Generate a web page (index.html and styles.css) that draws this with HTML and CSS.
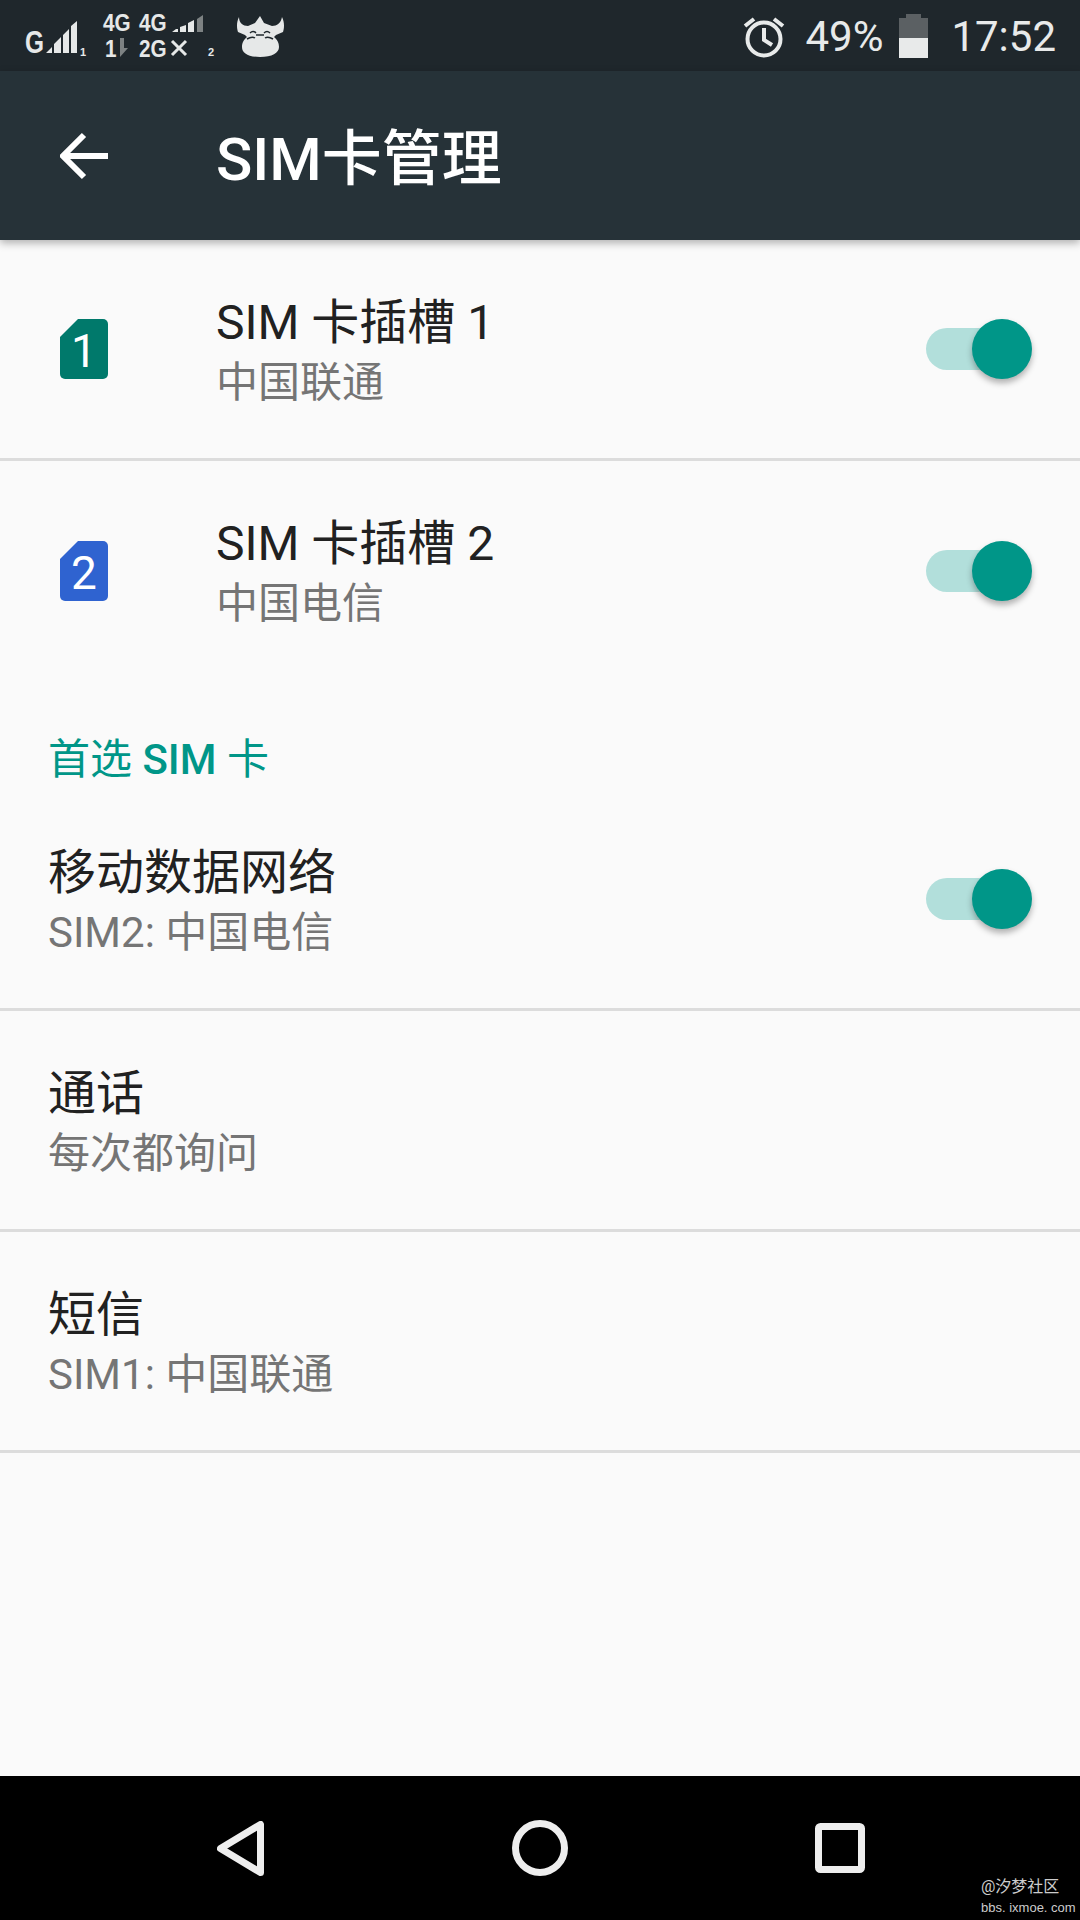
FILE: index.html
```html
<!DOCTYPE html>
<html lang="zh-CN">
<head>
    <meta charset="UTF-8">
    <meta name="viewport" content="width=device-width, initial-scale=1.0">
    <title>SIM卡管理</title>
    <link rel="stylesheet" href="styles.css">
</head>
<body>
<div class="page">

    <div class="statusbar">
        <svg class="net" width="300" height="71" viewBox="0 0 300 71">
            <!-- sim 1 -->
            <text class="net-big" x="25" y="53" textLength="19" lengthAdjust="spacingAndGlyphs">G</text>
            <path class="net-on" d="M46 53l6-6v6zM54 53v-9l7-7v16zM63 53v-18l6-6v24zM71 53v-27l6-5v32z"/>
            <text class="net-tiny" x="80" y="56">1</text>
            <!-- sim 2 -->
            <text class="net-mid" transform="translate(103 31) scale(0.9 1)">4G</text>
            <text class="net-mid" transform="translate(139 31) scale(0.9 1)">4G</text>
            <path class="net-on" d="M172 32l4-3h2v3zM180 32v-5l6-2v7zM188 32v-9l6-3v12z"/>
            <path class="net-off" d="M197 32v-13l6-4v17z"/>
            <text class="net-mid" transform="translate(105 57) scale(0.9 1)">1</text>
            <path class="net-off" d="M120 38h4v10h4l-8 9z"/>
            <text class="net-mid" transform="translate(139 57) scale(0.9 1)">2G</text>
            <path class="net-x" d="M172 41l14 14M186 41l-14 14"/>
            <text class="net-tiny" x="208" y="56">2</text>
            <!-- cow -->
            <path class="net-on" d="M239 17c0 6 4 9 9 9l7-3 5-7 4 7 8 3c5 0 9-3 10-9 3 6 2 12 1 15l-7 3-2 2c4 3 5 7 5 10 0 6-7 10-19 10s-18-4-18-10c0-3 1-7 5-10l-2-2-7-3c-1-3-2-9 1-15z"/>
            <path class="net-cut" d="M250 33q3-3 6 0M264 33q3-3 6 0M247 39q5-3 8-1M273 39q-5-3-8-1M256 35h8"/>
        </svg>

        <div class="status-right">
            <svg class="alarm" width="42" height="44" viewBox="0 0 42 44">
                <circle cx="21" cy="25" r="16.5"/>
                <path d="M21 14v12l8 5M2 12l9-7M40 12l-9-7"/>
            </svg>
            <span class="status-text batt-text">49%</span>
            <div class="battery">
                <div class="battery-cap"></div>
                <div class="battery-used"></div>
                <div class="battery-level"></div>
            </div>
            <span class="status-text">17:52</span>
        </div>
    </div>

    <div class="toolbar">
        <svg class="back" width="48" height="48" viewBox="0 0 48 48">
            <path d="M48 24H4M24 3L3 24l21 21"/>
        </svg>
        <span class="toolbar-title">SIM卡管理</span>
    </div>

    <div class="content">
        <div class="row row-sim divider">
            <svg class="sim-icon" width="48" height="60" viewBox="0 0 48 60">
                <path fill="#00796b" d="M18 0h25a5 5 0 0 1 5 5v50a5 5 0 0 1-5 5H5a5 5 0 0 1-5-5V18z"/>
                <text x="24" y="48" text-anchor="middle">1</text>
            </svg>
            <div class="row-text">
                <div class="row-title">SIM 卡插槽 1</div>
                <div class="row-sub">中国联通</div>
            </div>
            <div class="toggle"><div class="thumb"></div></div>
        </div>

        <div class="row row-sim">
            <svg class="sim-icon" width="48" height="60" viewBox="0 0 48 60">
                <path fill="#2f63d0" d="M18 0h25a5 5 0 0 1 5 5v50a5 5 0 0 1-5 5H5a5 5 0 0 1-5-5V18z"/>
                <text x="24" y="48" text-anchor="middle">2</text>
            </svg>
            <div class="row-text">
                <div class="row-title">SIM 卡插槽 2</div>
                <div class="row-sub">中国电信</div>
            </div>
            <div class="toggle"><div class="thumb"></div></div>
        </div>

        <div class="section-title">首选 <b>SIM</b> 卡</div>

        <div class="row divider">
            <div class="row-text">
                <div class="row-title">移动数据网络</div>
                <div class="row-sub">SIM2: 中国电信</div>
            </div>
            <div class="toggle"><div class="thumb"></div></div>
        </div>

        <div class="row divider">
            <div class="row-text">
                <div class="row-title">通话</div>
                <div class="row-sub">每次都询问</div>
            </div>
        </div>

        <div class="row divider">
            <div class="row-text">
                <div class="row-title">短信</div>
                <div class="row-sub">SIM1: 中国联通</div>
            </div>
        </div>
    </div>

    <div class="navbar">
        <svg class="nav-icon" width="47" height="55" viewBox="0 0 47 55">
            <path d="M43.5 3.5v48L3.5 27.5z"/>
        </svg>
        <svg class="nav-icon" width="56" height="56" viewBox="0 0 56 56">
            <circle cx="28" cy="28" r="24.5"/>
        </svg>
        <svg class="nav-icon" width="50" height="50" viewBox="0 0 50 50">
            <rect x="3.5" y="3.5" width="43" height="43" rx="2"/>
        </svg>
        <div class="watermark">
            <div>@汐梦社区</div>
            <div class="watermark-url">bbs. ixmoe. com</div>
        </div>
    </div>

</div>
</body>
</html>
```

FILE: styles.css
```css
* {
    box-sizing: border-box;
}
body {
    margin: 0;
    font-family: Roboto, "Noto Sans CJK SC", sans-serif;
    background: #000;
}
.page {
    width: 1080px;
    height: 1920px;
    display: flex;
    flex-direction: column;
    overflow: hidden;
}

/* status bar */
.statusbar {
    height: 71px;
    flex: none;
    background: #1f272c;
    display: flex;
    justify-content: space-between;
    align-items: center;
    padding-right: 24px;
    color: #e8eaea;
}
.net {
    display: block;
}
.net text {
    font-family: "Liberation Sans", sans-serif;
    font-weight: bold;
    fill: #e6e8e8;
}
.net-big {
    font-size: 32px;
}
.net-mid {
    font-size: 23px;
}
.net-tiny {
    font-size: 11px;
}
.net-on {
    fill: #e6e8e8;
}
.net-off {
    fill: #7d8283;
}
.net-x {
    fill: none;
    stroke: #e6e8e8;
    stroke-width: 3;
}
.net-cut {
    fill: none;
    stroke: #1f272c;
    stroke-width: 1.5;
}
.status-right {
    display: flex;
    align-items: center;
}
.alarm {
    margin-right: 20px;
    fill: none;
    stroke: #e8eaea;
    stroke-width: 4;
}
.status-text {
    font-size: 42px;
    line-height: 71px;
    padding-top: 2px;
}
.batt-text {
    margin-right: 16px;
}
.battery {
    width: 29px;
    height: 44px;
    margin-right: 23px;
    display: flex;
    flex-direction: column;
    align-items: center;
}
.battery-cap {
    width: 15px;
    height: 4px;
    background: #5b6063;
}
.battery-used {
    width: 100%;
    height: 20px;
    background: #5b6063;
}
.battery-level {
    width: 100%;
    height: 20px;
    background: #e8eaea;
}

/* toolbar */
.toolbar {
    height: 169px;
    flex: none;
    background: #263238;
    display: flex;
    align-items: center;
    padding-left: 60px;
    box-shadow: 0 3px 8px rgba(0, 0, 0, 0.3);
    position: relative;
    z-index: 1;
}
.back {
    margin-right: 108px;
    fill: none;
    stroke: #fff;
    stroke-width: 6;
}
.toolbar-title {
    font-size: 60px;
    font-weight: 500;
    color: #fff;
    padding-bottom: 4px;
}

/* list */
.content {
    flex: 1;
    background: #fafafa;
}
.row {
    height: 221px;
    padding: 0 48px 2px 48px;
    display: flex;
    align-items: center;
}
.row-sim {
    padding-left: 60px;
}
.divider {
    border-bottom: 3px solid #dcdcdc;
    padding-bottom: 0;
}
.sim-icon {
    flex: none;
    margin-right: 108px;
}
.sim-icon text {
    font-size: 46px;
    font-weight: 400;
    fill: #fff;
}
.row-text {
    flex: 1;
    padding-top: 7px;
}
.row-title {
    font-size: 48px;
    line-height: 60px;
    color: #212121;
}
.row-sub {
    font-size: 42px;
    line-height: 60px;
    color: #757575;
}
.section-title {
    height: 108px;
    padding: 48px 0 0 48px;
    font-size: 42px;
    line-height: 60px;
    color: #009688;
}
.section-title b {
    font-weight: 500;
}
.toggle {
    width: 86px;
    height: 42px;
    flex: none;
    margin-right: 20px;
    border-radius: 21px;
    background: #b2dfdb;
    position: relative;
}
.thumb {
    position: absolute;
    top: -9px;
    left: 46px;
    width: 60px;
    height: 60px;
    border-radius: 50%;
    background: #009688;
    box-shadow: 0 4px 6px rgba(0, 0, 0, 0.3);
}

/* nav bar */
.navbar {
    height: 144px;
    flex: none;
    background: #000;
    display: flex;
    align-items: center;
    padding: 0 215px 0 217px;
    justify-content: space-between;
    position: relative;
}
.nav-icon {
    fill: none;
    stroke: #eee;
    stroke-width: 7;
    stroke-linejoin: round;
}
.watermark {
    position: absolute;
    left: 981px;
    top: 100px;
    font-size: 16px;
    line-height: 21px;
    color: #ccc;
    white-space: nowrap;
}
.watermark-url {
    font-family: "Liberation Sans", sans-serif;
    font-size: 13px;
}
```
